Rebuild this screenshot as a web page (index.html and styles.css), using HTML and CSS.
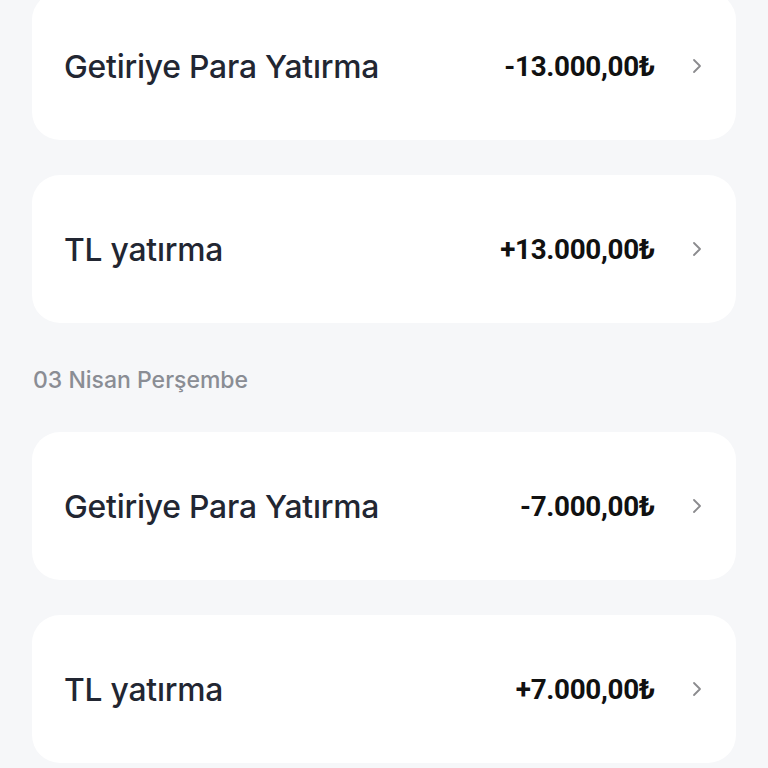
FILE: index.html
```html
<!DOCTYPE html>
<html lang="tr">
<head>
    <meta charset="UTF-8">
    <meta name="viewport" content="width=device-width, initial-scale=1.0">
    <title>Hesap Hareketleri</title>
    <link rel="stylesheet" href="styles.css">
</head>
<body>
    <div class="list">
        <div class="item">
            <span class="title">Getiriye Para Yatırma</span>
            <span class="amount">-13.000,00₺</span>
            <svg class="chevron" viewBox="0 0 10 16"><path d="M2 2l6 6-6 6"/></svg>
        </div>
        <div class="item">
            <span class="title">TL yatırma</span>
            <span class="amount">+13.000,00₺</span>
            <svg class="chevron" viewBox="0 0 10 16"><path d="M2 2l6 6-6 6"/></svg>
        </div>

        <div class="date">03 Nisan Perşembe</div>

        <div class="item">
            <span class="title">Getiriye Para Yatırma</span>
            <span class="amount">-7.000,00₺</span>
            <svg class="chevron" viewBox="0 0 10 16"><path d="M2 2l6 6-6 6"/></svg>
        </div>
        <div class="item">
            <span class="title">TL yatırma</span>
            <span class="amount">+7.000,00₺</span>
            <svg class="chevron" viewBox="0 0 10 16"><path d="M2 2l6 6-6 6"/></svg>
        </div>
    </div>
</body>
</html>
```

FILE: styles.css
```css
body {
    margin: 0;
    background: #f6f7f9;
    font-family: Inter, "Noto Sans", sans-serif;
    overflow: hidden;
}
.list {
    display: flex;
    flex-direction: column;
    gap: 35px;
    padding: 0 32px;
    margin-top: -8px;
}
.item {
    display: flex;
    align-items: center;
    height: 148px;
    padding: 0 32px;
    background: #fff;
    border-radius: 28px;
}
.title {
    flex: 1;
    font-size: 31.8px;
    font-weight: 500;
    color: #222632;
    letter-spacing: -0.2px;
}
.amount {
    font-family: Roboto, "DejaVu Sans", sans-serif;
    font-weight: 700;
    font-size: 27.8px;
    color: #111;
    letter-spacing: -0.3px;
}
.chevron {
    width: 10px;
    height: 16px;
    margin-left: 37px;
    margin-right: 2px;
    fill: none;
    stroke: #8b8b8e;
    stroke-width: 1.8;
    stroke-linecap: round;
    stroke-linejoin: round;
}
.date {
    margin: 8px 0 3px 1px;
    font-size: 23px;
    line-height: 28px;
    font-weight: 500;
    color: #8a8d94;
}
```
